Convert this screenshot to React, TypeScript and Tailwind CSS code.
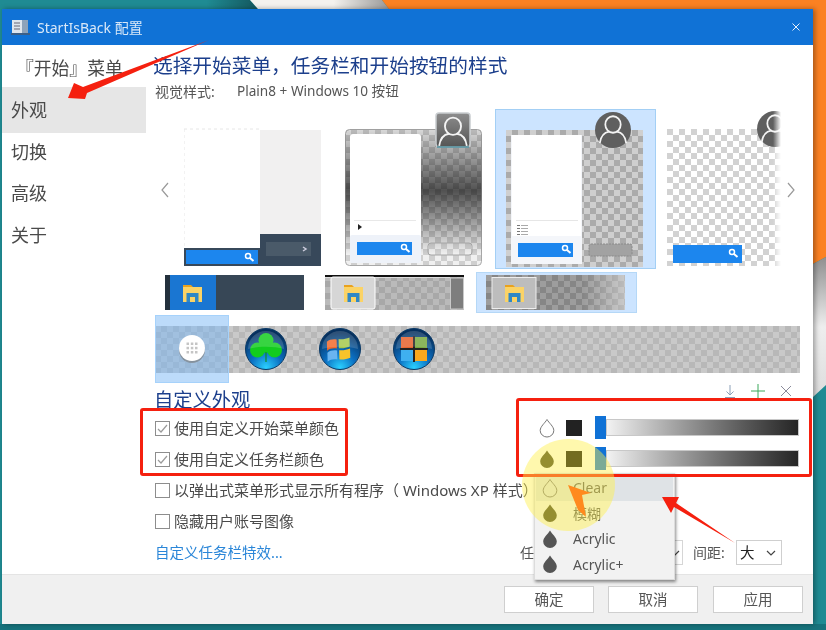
import React from "react";

const Check = ({ id, a, b }: { id: string; a: string; b: string }) => (
  <pattern id={id} width="12" height="12" patternUnits="userSpaceOnUse">
    <rect width="12" height="12" fill={a} />
    <rect width="6" height="6" fill={b} />
    <rect x="6" y="6" width="6" height="6" fill={b} />
  </pattern>
);

const User = ({ cx, cy, s = 1 }: { cx: number; cy: number; s?: number }) => (
  <g transform={`translate(${cx} ${cy}) scale(${s})`} fill="none" stroke="#f4f4f4" strokeWidth="1.6">
    <ellipse cx="0" cy="-5" rx="7" ry="7.5" />
    <path d="M-12 12c1-7 5-10 8.500-10.500M12 12c-1-7-5-10-8.500-10.500" />
  </g>
);

const Search = ({ x, y }: { x: number; y: number }) => (
  <g transform={`translate(${x} ${y})`} fill="none" stroke="#fff">
    <circle cx="0" cy="0" r="2.500" strokeWidth="1.500" />
    <path d="M2 2l3.500 3" strokeWidth="2" />
  </g>
);

const Thumb1 = () => (
  <svg width="137" height="157" viewBox="0 -20 137 157" className="block">
    <rect x="0" y="0" width="76" height="137" fill="#fff" />
    <path d="M0 0h76M0 0v120" stroke="#e6e6e6" strokeDasharray="3 3" fill="none" />
    <rect x="76" y="1" width="61" height="104" fill="#f1f0f0" />
    <rect x="76" y="105" width="61" height="32" fill="#37485a" />
    <rect x="0" y="119" width="77" height="18" fill="#37485a" />
    <rect x="2" y="121" width="72" height="14" fill="#1c86ee" />
    <Search x={64} y={127} />
    <rect x="82" y="113" width="45" height="14" fill="#4a5a69" />
    <path d="M119 118l3 2-3 2" stroke="#ccd" strokeWidth="1.500" fill="none" />
  </svg>
);

const Thumb2 = () => (
  <svg width="137" height="157" viewBox="0 -20 137 157" className="block">
    <defs>
      <Check id="c2" a="#cfcfcf" b="#f0f0f0" />
      <linearGradient id="g2" x1="0" y1="0" x2="0" y2="1">
        <stop offset="0" stopColor="#000" stopOpacity="0.1" />
        <stop offset="0.45" stopColor="#000" stopOpacity="0.66" />
        <stop offset="0.92" stopColor="#000" stopOpacity="0" />
      </linearGradient>
      <linearGradient id="av2" x1="0" y1="0" x2="0" y2="1">
        <stop offset="0" stopColor="#8d8d8d" />
        <stop offset="1" stopColor="#555" />
      </linearGradient>
    </defs>
    <rect x="0.500" y="0.500" width="136" height="136" rx="4" fill="url(#c2)" stroke="#a8a8a8" />
    <rect x="0.500" y="0.500" width="136" height="136" rx="4" fill="url(#g2)" />
    <rect x="5" y="5" width="71" height="129" rx="3" fill="#fff" />
    <rect x="5" y="106" width="71" height="28" rx="2" fill="#eef2f9" />
    <path d="M9 91.500h62" stroke="#e8e8e8" />
    <path d="M13 95l4 3-4 3z" fill="#222" />
    <rect x="12" y="113" width="55" height="13" fill="#1c86ee" />
    <Search x={59} y={118} />
    <rect x="83" y="114" width="44" height="12" rx="3" fill="#fff" fillOpacity="0.08" stroke="#a5a5a5" />
    <rect x="91" y="-16" width="34" height="34" rx="3" fill="url(#av2)" stroke="#c9cdd0" strokeWidth="1.500" />
    <path d="M92 18h32" stroke="#4e8e9c" strokeWidth="1.500" />
    <User cx={108} cy={3} s={1.150} />
  </svg>
);

const Thumb3 = () => (
  <svg width="137" height="157" viewBox="0 -20 137 157" className="block">
    <defs>
      <Check id="c3" a="#ababab" b="#cfcfcf" />
    </defs>
    <rect width="137" height="137" fill="url(#c3)" />
    <rect x="5" y="5" width="71" height="129" fill="#f4f6fa" />
    <rect x="6" y="5" width="69" height="85" fill="#fff" />
    <rect x="6" y="90" width="69" height="16" fill="#fff" />
    <path d="M10 90.500h62" stroke="#e6e6e6" />
    <path d="M11 95.500h3M11 98.500h3M11 101.500h3M11 104.500h3" stroke="#777" />
    <path d="M15 95.500h7M15 98.500h7M15 101.500h7M15 104.500h7" stroke="#aaa" />
    <rect x="12" y="113" width="55" height="14" fill="#1c86ee" />
    <Search x={59} y={118} />
    <rect x="83" y="114" width="43" height="12" rx="2" fill="#a2a2a2" stroke="#8a8a8a" strokeDasharray="2 1" />
    <circle cx="107" cy="0" r="18" fill="#5f5f5f" />
    <User cx={107} cy={0} s={1.100} />
  </svg>
);

const Thumb4 = () => (
  <svg width="114" height="157" viewBox="0 -20 114 157" className="block">
    <defs>
      <Check id="c4" a="#ffffff" b="#d2d2d2" />
      <linearGradient id="f4" x1="0" y1="0" x2="1" y2="0">
        <stop offset="0.93" stopColor="#fff" stopOpacity="0" />
        <stop offset="1" stopColor="#fff" />
      </linearGradient>
    </defs>
    <rect width="114" height="137" fill="url(#c4)" />
    <rect x="6" y="116" width="69" height="18" fill="#1c86ee" />
    <Search x={65} y={123} />
    <circle cx="108" cy="0" r="18" fill="#5f5f5f" />
    <User cx={108} cy={0} s={1.100} />
    <rect x="0" y="-20" width="114" height="157" fill="url(#f4)" />
  </svg>
);

const Folder = ({ x, y }: { x: number; y: number }) => (
  <g transform={`translate(${x} ${y})`}>
    <path d="M0 1h8l2 2h-10z" fill="#e9a21e" />
    <rect x="0" y="3" width="19" height="15" fill="#fbd366" />
    <path d="M3.500 18v-9h12v9h-3.500v-5h-5v5z" fill="#2f87c6" />
  </g>
);

const Bar1 = () => (
  <svg width="139" height="35" className="block">
    <rect width="139" height="35" fill="#374756" />
    <rect width="5" height="35" fill="#23303c" />
    <rect x="5" width="46" height="35" fill="#1a76d2" />
    <Folder x={18} y={9} />
  </svg>
);

const Bar2 = () => (
  <svg width="139" height="35" className="block">
    <defs>
      <Check id="c5" a="#a8a8a8" b="#bababa" />
    </defs>
    <rect width="139" height="35" fill="url(#c5)" />
    <rect width="139" height="2" fill="#111" />
    <rect y="2" width="125" height="1" fill="#ddd" />
    <rect x="6" y="2" width="44" height="32" rx="2" fill="#d6d6d6" stroke="#fff" />
    <Folder x={19} y={9} />
    <rect x="125.500" y="3" width="13" height="31" fill="#7e7e7e" stroke="#c9c9c9" />
  </svg>
);

const Bar3 = () => (
  <svg width="139" height="35" className="block">
    <defs>
      <Check id="c6" a="#868686" b="#9d9d9d" />
      <linearGradient id="g6" x1="0" y1="0" x2="1" y2="0">
        <stop offset="0.7" stopColor="#fff" stopOpacity="0" />
        <stop offset="1" stopColor="#fff" stopOpacity="0.45" />
      </linearGradient>
    </defs>
    <rect width="139" height="35" fill="url(#c6)" />
    <rect width="139" height="35" fill="url(#g6)" />
    <rect x="6" y="2.500" width="44" height="31" fill="#bdbdbd" stroke="#eee" />
    <Folder x={19} y={9} />
  </svg>
);

const Orb = ({ id, children }: { id: string; children: React.ReactNode }) => (
  <svg width="42" height="42" viewBox="0 0 42 42" className="block">
    <defs>
      <radialGradient id={id} cx="0.5" cy="0.95" r="0.85">
        <stop offset="0" stopColor="#2ad0ff" />
        <stop offset="0.45" stopColor="#0b6fc2" />
        <stop offset="1" stopColor="#06305e" />
      </radialGradient>
    </defs>
    <circle cx="21" cy="21" r="20.500" fill={`url(#${id})`} stroke="#0b3a66" />
    {children}
    <path d="M3 21a18 18 0 0 1 36 0c-10-3-26-3-36 0z" fill="#fff" fillOpacity="0.16" />
  </svg>
);

const Drop = ({ filled, dark }: { filled?: boolean; dark?: boolean }) => (
  <svg width="16" height="20" viewBox="0 0 16 20" className="block">
    <path
      d="M8 1.500C6 5 1.200 8.500 1.200 12.500a6.800 6.500 0 0 0 13.600 0C14.800 8.500 10 5 8 1.500z"
      fill={filled ? (dark ? "#555555" : "#3f3f1c") : "none"}
      stroke={filled ? "none" : "#777"}
      strokeWidth="1"
    />
  </svg>
);

const Chevron = () => (
  <svg width="10" height="6" viewBox="0 0 10 6" className="block">
    <path d="M1 1l4 4 4-4" stroke="#444" fill="none" strokeWidth="1.200" />
  </svg>
);

const CheckRow = ({ label, checked }: { label: string; checked?: boolean }) => (
  <div className="h-[31px] flex items-center">
    <div className="w-[15px] h-[15px] border border-[#8d8d8d] bg-white flex items-center justify-center shrink-0">
      {checked && (
        <svg width="13" height="13" viewBox="0 0 13 13">
          <path d="M2 7l3 3 6-7" stroke="#9a9a9a" fill="none" strokeWidth="1.200" />
        </svg>
      )}
    </div>
    <span className="ml-[4px] text-[15px] text-[#4a4a4a] whitespace-nowrap">{label}</span>
  </div>
);

const ColorRow = ({ swatch }: { swatch: string }) => (
  <div className="h-[23px] flex items-center pl-[23px]">
    <Drop filled={swatch !== "#222222"} />
    <div className="ml-[11px] w-[16px] h-[16px]" style={{ background: swatch }} />
    <div className="ml-[13px] w-[11px] h-[23px] bg-[#1072d6]" />
    <div className="w-[193px] h-[17px] border border-[#c8c8c8] bg-gradient-to-r from-[#f2f2f2] to-[#262626]" />
  </div>
);

const MenuItem = ({ label, active, drop }: { label: string; active?: boolean; drop: React.ReactNode }) => (
  <div className={`h-[25.500px] flex items-center pl-[6px] ${active ? "bg-[#dfe3e6]" : ""}`}>
    <div className="w-[31px] shrink-0">{drop}</div>
    <span className="text-[14px] text-[#555]">{label}</span>
  </div>
);

const FootBtn = ({ label, className }: { label: string; className?: string }) => (
  <div className={`w-[90px] h-[27px] bg-white border border-[#cfcfcf] flex items-center justify-center text-[14.500px] text-[#555] ${className ?? ""}`}>
    {label}
  </div>
);

export default function App() {
  return (
    <div className="relative w-[826px] h-[630px] overflow-hidden bg-[#1f8b93] font-['Noto_Sans','Noto_Sans_CJK_SC',sans-serif] blur-[0.35px]">
      {/* wallpaper */}
      <svg width="826" height="630" className="absolute inset-0">
        <defs>
          <linearGradient id="wpg" x1="0" y1="0" x2="0" y2="1">
            <stop offset="0" stopColor="#8f8f8f" />
            <stop offset="0.5" stopColor="#eeeeee" />
            <stop offset="1" stopColor="#dddddd" />
          </linearGradient>
          <linearGradient id="wpw" x1="0" y1="0" x2="1" y2="0">
            <stop offset="0.6" stopColor="#f4f2ee" />
            <stop offset="1" stopColor="#999" />
          </linearGradient>
          <linearGradient id="wpt" x1="0" y1="0" x2="1" y2="0">
            <stop offset="0.8" stopColor="#1f8b93" />
            <stop offset="1" stopColor="#14575e" />
          </linearGradient>
        </defs>
        <polygon points="0,0 250,0 258,9 0,9" fill="url(#wpt)" />
        <polygon points="250,0 382,0 389,9 258,9" fill="url(#wpw)" />
        <polygon points="382,0 826,0 826,257 813,264 813,9 389,9" fill="#fb8122" />
        <polygon points="813,264 826,257 826,385 813,397" fill="url(#wpg)" />
        <rect x="0" y="624" width="826" height="6" fill="#17737c" />
      </svg>

      {/* window */}
      <div className="relative ml-[2px] mt-[9px] w-[811px] h-[615px] flex flex-col bg-white shadow-[2px_0_5px_rgba(0,0,0,0.35)]">
        <div className="h-[36px] shrink-0 bg-[#1072d6] flex items-center pl-[9px] pr-[12px]">
          <svg width="20" height="20" viewBox="0 0 20 20" className="block">
            <rect x="1" y="3" width="10" height="13" fill="#dfe6ee" />
            <rect x="11" y="3" width="6" height="13" fill="#8ea3ba" />
            <path d="M3 6h6M3 9h6M3 12h6" stroke="#667" />
            <rect x="0" y="16" width="19" height="2" fill="#3c5f88" />
          </svg>
          <span className="ml-[6px] text-[14px] text-[#d9e8f8]">StartIsBack 配置</span>
          <svg width="10" height="10" viewBox="0 0 10 10" className="ml-auto block">
            <path d="M1.500 1.500l7 7M8.500 1.500l-7 7" stroke="#e8f1fb" strokeWidth="1" />
          </svg>
        </div>

        <div className="flex-1 flex min-h-0">
          {/* sidebar */}
          <div className="w-[144px] shrink-0 text-[18px] text-[#4a4a4a]">
            <div className="h-[42px] pt-[9px] pl-[14px] text-[17.800px] leading-[28px] whitespace-nowrap">『开始』菜单</div>
            <div className="h-[46px] bg-[#e6e6e6] flex items-center pl-[9px]">外观</div>
            <div className="h-[39px] flex items-center pl-[9px]">切换</div>
            <div className="h-[42px] flex items-center pl-[9px]">高级</div>
            <div className="h-[42px] flex items-center pl-[9px]">关于</div>
          </div>

          {/* main */}
          <div className="flex-1 min-w-0 pl-[9px]">
            <div className="-ml-[2px] pt-[8px] h-[37px] text-[19.700px] leading-[26px] text-[#1c3f8c] whitespace-nowrap">
              选择开始菜单，任务栏和开始按钮的样式
            </div>
            <div className="h-[18px] flex items-center text-[13.600px] text-[#555]">
              <span className="w-[82px] text-[14px]">视觉样式:</span>
              <span>Plain8 + Windows 10 按钮</span>
            </div>
            <div className="h-[9px]" />

            {/* start-menu thumbs */}
            <div className="h-[160px] flex items-start">
              <div className="w-[29px] h-[157px] flex items-center pl-[5px] pt-[5px]">
                <svg width="10" height="16" viewBox="0 0 10 16">
                  <path d="M8 1L2 8l6 7" stroke="#999" fill="none" strokeWidth="1.200" />
                </svg>
              </div>
              <Thumb1 />
              <div className="ml-[24px]">
                <Thumb2 />
              </div>
              <div className="ml-[13px] w-[161px] h-[160px] bg-[#cce4ff] border border-[#a3cff5] pl-[10px]">
                <Thumb3 />
              </div>
              <div className="ml-[11px]">
                <Thumb4 />
              </div>
              <div className="ml-[5px] h-[157px] flex items-center pt-[5px]">
                <svg width="10" height="16" viewBox="0 0 10 16">
                  <path d="M2 1l6 7-6 7" stroke="#999" fill="none" strokeWidth="1.200" />
                </svg>
              </div>
            </div>

            {/* taskbar thumbs */}
            <div className="h-[46px] flex items-start pt-[3px] pl-[10px]">
              <div className="mt-[3px]">
                <Bar1 />
              </div>
              <div className="mt-[3px] ml-[21px]">
                <Bar2 />
              </div>
              <div className="ml-[12px] w-[161px] h-[41px] bg-[#cce4ff] border border-[#b5d8f7] pl-[9px] pt-[2px]">
                <Bar3 />
              </div>
            </div>

            {/* start buttons */}
            <div className="h-[68px] flex items-center">
              <div className="w-[645px] h-[47px] flex items-center bg-[length:12px_12px] bg-[repeating-conic-gradient(#b8b8b8_0_25%,#c9c9c9_0_50%)]">
                <div className="w-[74px] h-[68px] shrink-0 border border-[#a6d2fb] bg-[#7ab8f5]/50 flex items-center justify-center">
                  <svg width="28" height="30" viewBox="0 0 28 30" className="block">
                    <ellipse cx="14" cy="16" rx="13" ry="13" fill="#777" fillOpacity="0.6" />
                    <circle cx="14" cy="14" r="13" fill="#fff" />
                    <g fill="#c5c5c5">
                      <rect x="8.500" y="8.500" width="2.500" height="2.500" />
                      <rect x="12.800" y="8.500" width="2.500" height="2.500" />
                      <rect x="17" y="8.500" width="2.500" height="2.500" />
                      <rect x="8.500" y="12.800" width="2.500" height="2.500" />
                      <rect x="12.800" y="12.800" width="2.500" height="2.500" />
                      <rect x="17" y="12.800" width="2.500" height="2.500" />
                      <rect x="8.500" y="17" width="2.500" height="2.500" />
                      <rect x="12.800" y="17" width="2.500" height="2.500" />
                      <rect x="17" y="17" width="2.500" height="2.500" />
                    </g>
                  </svg>
                </div>
                <div className="w-[74px] shrink-0 flex justify-center">
                  <Orb id="o1">
                    <g fill="#12cc1e">
                      <circle cx="21" cy="12.500" r="7.500" />
                      <circle cx="12.500" cy="22" r="7.500" />
                      <circle cx="29.500" cy="22" r="7.500" />
                      <circle cx="21" cy="20" r="5" />
                    </g>
                    <path d="M21 24v10" stroke="#0e8e20" strokeWidth="1.200" />
                  </Orb>
                </div>
                <div className="w-[74px] shrink-0 flex justify-center">
                  <Orb id="o2">
                    <g transform="rotate(-8 21 21)">
                      <path d="M9 12c3-2 6-2 10-1l-1 9c-4-1-7-1-10 1z" fill="#f1682a" />
                      <path d="M21 11c3 1 7 1 11 0l-1 9c-4 1-8 1-11 0z" fill="#a6c84a" />
                      <path d="M8 23c3-2 6-2 10-1l-1 9c-4-1-7-1-10 1z" fill="#6ab4f0" />
                      <path d="M20 22c3 1 7 1 11 0l-1 9c-4 1-8 1-11 0z" fill="#f7c32a" />
                    </g>
                  </Orb>
                </div>
                <div className="w-[74px] shrink-0 flex justify-center">
                  <Orb id="o3">
                    <rect x="8" y="9" width="12" height="11" fill="#e6602a" />
                    <rect x="22" y="9" width="12" height="11" fill="#76a83e" />
                    <rect x="8" y="22" width="12" height="11" fill="#3fb0f0" />
                    <rect x="22" y="22" width="12" height="11" fill="#f9a81e" />
                    <path d="M7 21h28M21 8v26" stroke="#222" strokeWidth="2" />
                  </Orb>
                </div>
              </div>
            </div>

            {/* custom appearance */}
            <div className="flex">
              <div className="w-[361px] shrink-0">
                <div className="-ml-px h-[30px] text-[19.300px] leading-[34px] text-[#1c3f8c]">自定义外观</div>
                <CheckRow label="使用自定义开始菜单颜色" checked />
                <CheckRow label="使用自定义任务栏颜色" checked />
                <CheckRow label="以弹出式菜单形式显示所有程序（ Windows XP 样式）" />
                <CheckRow label="隐藏用户账号图像" />
                <div className="h-[31px] flex items-center text-[14.500px] text-[#2a86d8]">自定义任务栏特效...</div>
              </div>
              <div className="flex-1 min-w-0">
                <div className="h-[16px] flex items-center">
                  <svg width="16" height="16" viewBox="0 0 16 16" className="ml-[206px] block">
                    <path d="M8 2v10M4.500 8.500L8 12l3.500-3.500M3 14.500h10" stroke="#8ca0b8" fill="none" />
                  </svg>
                  <svg width="16" height="16" viewBox="0 0 16 16" className="ml-[12px] block">
                    <path d="M8 1v14M1 8h14" stroke="#3aa85a" fill="none" />
                  </svg>
                  <svg width="14" height="14" viewBox="0 0 14 14" className="ml-[13px] block">
                    <path d="M2 2l10 10M12 2L2 12" stroke="#8a8a9a" fill="none" />
                  </svg>
                </div>
                <div className="h-[17px]" />
                <ColorRow swatch="#222222" />
                <div className="h-[8px]" />
                <ColorRow swatch="#000000" />
                <div className="h-[70px]" />
                <div className="h-[25px] flex items-center pl-[4px]">
                  <span className="w-[40px] text-[14px] text-[#555]">任</span>
                  <div className="w-[123px] h-[25px] border border-[#d6d6d6] flex items-center justify-end pr-[2px]">
                    <Chevron />
                  </div>
                  <span className="ml-[10px] w-[43px] text-[14px] text-[#555] whitespace-nowrap">间距:</span>
                  <div className="w-[46px] h-[25px] border border-[#cfcfcf] flex items-center justify-between pl-[3px] pr-[5px] text-[14.500px] text-[#222]">
                    大
                    <Chevron />
                  </div>
                </div>
              </div>
            </div>
          </div>
        </div>

        <div className="h-[50px] shrink-0 bg-[#f0f0f0] border-t border-[#e4e4e4] flex items-start justify-end pt-[11px] pr-[10px]">
          <FootBtn label="确定" />
          <FootBtn label="取消" className="ml-[14px]" />
          <FootBtn label="应用" className="ml-[15px]" />
        </div>
      </div>

      {/* popup menu */}
      <div className="absolute left-[534px] top-[473px] w-[141px] h-[107px] bg-[#f2f2f2] border border-[#dcdcdc] pt-[1px] px-[1px] shadow-[1px_2px_3px_rgba(0,0,0,0.45)]">
        <MenuItem label="Clear" active drop={<Drop />} />
        <MenuItem label="模糊" drop={<Drop filled />} />
        <MenuItem label="Acrylic" drop={<Drop filled dark />} />
        <MenuItem label="Acrylic+" drop={<Drop filled dark />} />
      </div>

      {/* annotations */}
      <div className="absolute left-[140px] top-[408px] w-[208px] h-[68px] border-[3px] border-[#f5200f] rounded-[3px]" />
      <div className="absolute left-[516px] top-[398px] w-[296px] h-[79px] border-[3px] border-[#f5200f] rounded-[3px]" />
      <div className="absolute left-[522px] top-[439px] w-[93px] h-[92px] rounded-full bg-[#fff04a]/45" />
      <svg width="826" height="630" className="absolute inset-0 pointer-events-none">
        <polygon points="68,98 74,83 83,87 209,40 87,93 85,99" fill="#f5200f" />
        <polygon points="662,497 679,497 676,503 735,543 674,507 671,513" fill="#f5200f" />
        <polygon points="568,485 591,493 582,495 586,517 578,510" fill="#ff8a1e" />
      </svg>
    </div>
  );
}
